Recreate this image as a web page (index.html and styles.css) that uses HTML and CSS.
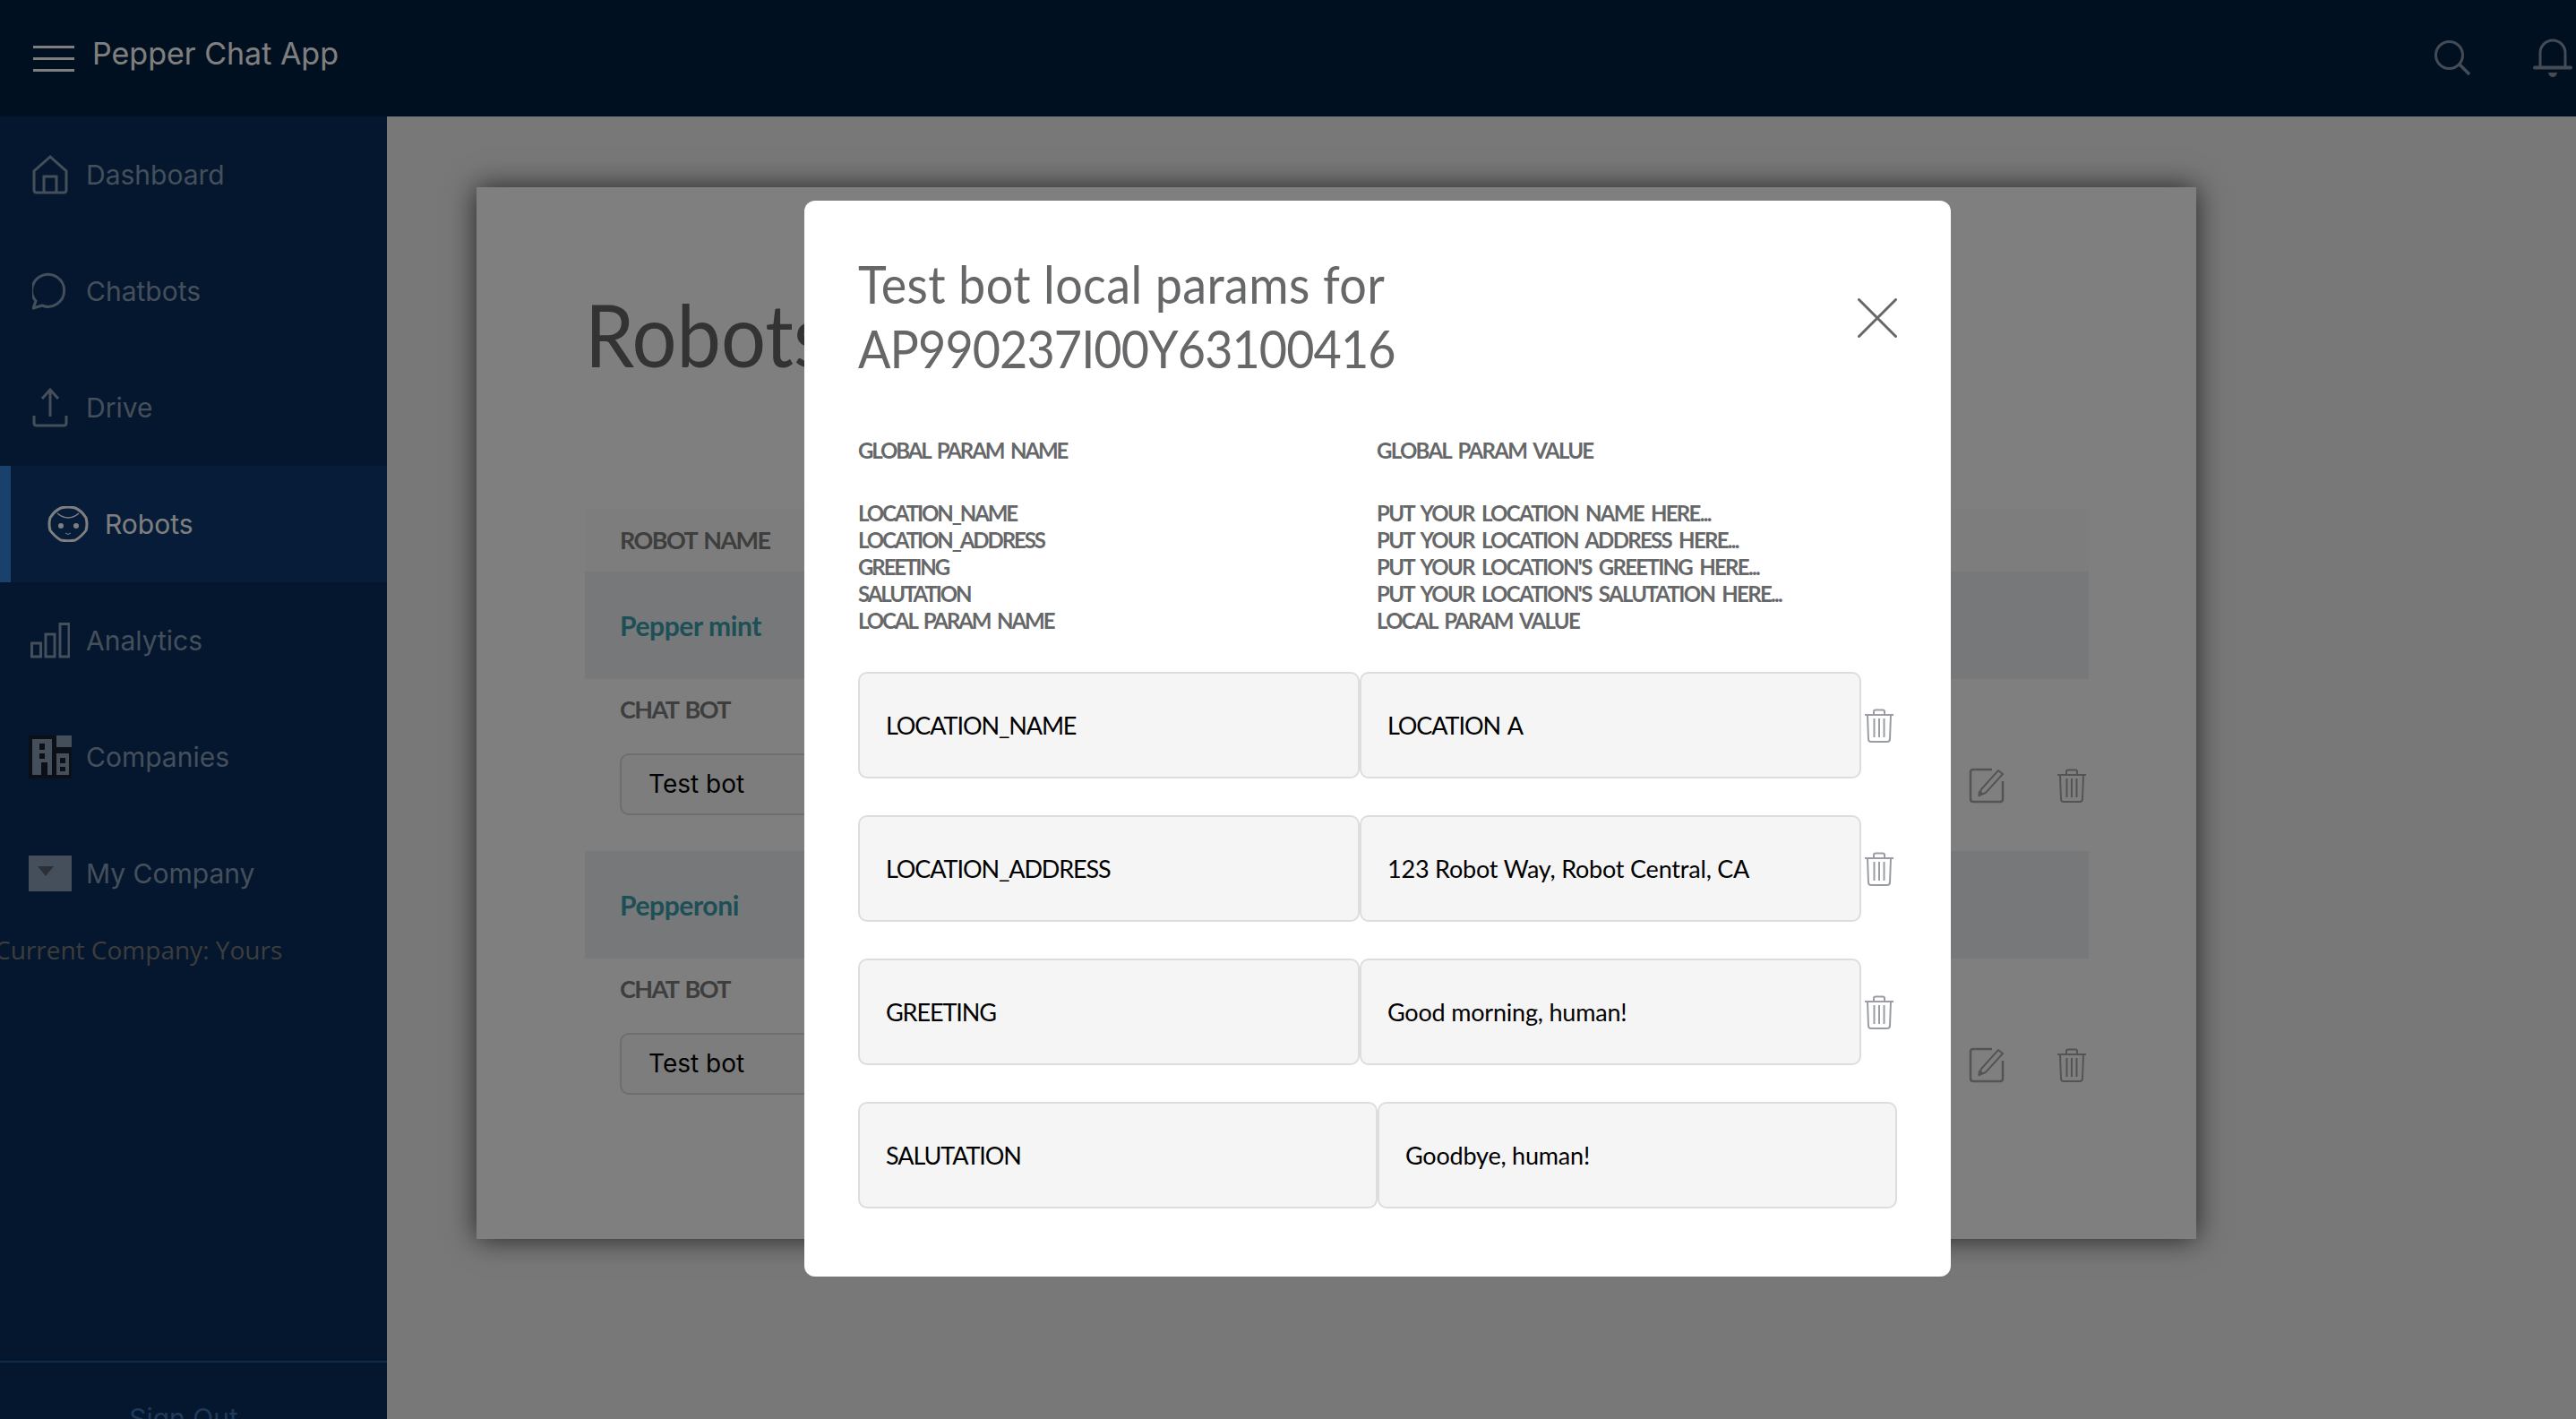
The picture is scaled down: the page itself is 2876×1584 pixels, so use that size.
FILE: index.html
```html
<!DOCTYPE html>
<html lang="en">
<head>
  <meta charset="UTF-8">
  <meta name="viewport" content="width=device-width, initial-scale=1.0">
  <title>Pepper Chat App</title>
  <link rel="stylesheet" href="styles.css">
</head>
<body>
  <svg class="icon-defs" width="0" height="0">
    <symbol id="trash" viewBox="0 0 34 38">
      <path d="M1 7h32M11 7V3.500Q11 1.500 13 1.500h8q2 0 2 2V7M4 7l1 27q0 3 3 3h18q3 0 3-3l1-27M11.500 11v21M17 11v21M22.500 11v21" fill="none" stroke="currentColor" stroke-width="2"/>
    </symbol>
    <symbol id="edit" viewBox="0 0 40 40">
      <path d="M26 2H5Q2 2 2 5v30q0 3 3 3h30q3 0 3-3V15" fill="none" stroke="currentColor" stroke-width="2.500"/>
      <path d="M33 3l5 4-19 21-7 3 2-7zM11 27l3 3" fill="none" stroke="currentColor" stroke-width="2"/>
      <path d="M10 31l2-6 5 4z" fill="currentColor"/>
    </symbol>
  </svg>

  <header class="topbar">
    <div class="brand">
      <div class="hamburger"><span></span><span></span><span></span></div>
      <span class="brand-name">Pepper Chat App</span>
    </div>
    <div class="topbar-icons">
      <svg class="icon-search" viewBox="0 0 40 40"><circle cx="16.500" cy="16.500" r="15" fill="none" stroke="currentColor" stroke-width="3"/><path d="M28 27l11 11" fill="none" stroke="currentColor" stroke-width="3.500"/></svg>
      <svg class="icon-bell" viewBox="0 0 44 44"><path d="M8 32V16a14 14 0 0 1 28 0v16" fill="none" stroke="currentColor" stroke-width="3"/><path d="M2 32.500h40" fill="none" stroke="currentColor" stroke-width="4" stroke-linecap="round"/><path d="M17 38h10q-1 5-5 5t-5-5z" fill="currentColor"/></svg>
    </div>
  </header>

  <div class="layout">
    <aside class="sidebar">
      <nav class="side-nav">
        <a class="nav-item">
          <svg class="nav-icon" viewBox="0 0 40 44"><path d="M20 2L2 18v21q0 3 3 3h30q3 0 3-3V18zM13 42V24h14v18" fill="none" stroke="currentColor" stroke-width="3"/></svg>
          <span>Dashboard</span>
        </a>
        <a class="nav-item">
          <svg class="nav-icon" viewBox="0 0 40 40"><path d="M4 31a18 18 0 1 1 7 5l-10 3z" fill="none" stroke="currentColor" stroke-width="3" stroke-linejoin="round"/></svg>
          <span>Chatbots</span>
        </a>
        <a class="nav-item">
          <svg class="nav-icon" viewBox="0 0 40 44"><path d="M20 32V3M11 12l9-10 9 10M2 31v8q0 3 3 3h30q3 0 3-3v-8" fill="none" stroke="currentColor" stroke-width="3"/></svg>
          <span>Drive</span>
        </a>
        <a class="nav-item nav-item-active">
          <svg class="nav-icon-robot" viewBox="0 0 46 40"><path d="M15 2Q23 0 31 2Q38 5 43 13Q45 20 43 27Q38 34 31 38Q23 39.500 15 38Q8 34 3 27Q1 20 3 13Q8 5 15 2z" fill="none" stroke="currentColor" stroke-width="3" stroke-linejoin="round"/><path d="M11 8q12 10 24 0" fill="none" stroke="currentColor" stroke-width="1.500"/><circle cx="15" cy="22" r="3" fill="currentColor"/><circle cx="32" cy="22" r="3" fill="currentColor"/><path d="M20 30q3 3 6 0" fill="none" stroke="currentColor" stroke-width="1"/></svg>
          <span>Robots</span>
        </a>
        <a class="nav-item">
          <svg class="nav-icon-wide" viewBox="0 0 44 40"><path d="M1.500 23h10v15h-10zM17 13h10v25H17zM33 1.500h10V38H33z" fill="none" stroke="currentColor" stroke-width="3"/></svg>
          <span>Analytics</span>
        </a>
        <a class="nav-item">
          <svg class="nav-icon-box" viewBox="0 0 48 48"><rect width="48" height="48" fill="#16202e"/><path d="M4 4h22v40h-5V30h-7v14H4zM31 0h17v13H31zM31 20h14v24H31z" fill="currentColor"/><path d="M12 9h6v7h-6zM12 20h6v6h-6zM35 25h6v6h-6zM35 35h6v5h-6z" fill="#16202e"/></svg>
          <span>Companies</span>
        </a>
        <a class="nav-item">
          <svg class="nav-icon-box" viewBox="0 0 48 40"><rect width="48" height="40" fill="currentColor"/><path d="M10 12h18l-9 11z" fill="#545e70"/></svg>
          <span>My Company</span>
        </a>
      </nav>
      <div class="current-company">Current Company: Yours</div>
      <div class="side-footer">Sign Out</div>
    </aside>

    <main class="content">
      <section class="card">
        <h1>Robots</h1>
        <div class="robot-head">ROBOT NAME</div>

        <div class="robot-row">Pepper mint</div>
        <div class="robot-sub">
          <div>
            <div class="robot-label">CHAT BOT</div>
            <div class="bot-select">Test bot</div>
          </div>
          <div class="robot-actions">
            <svg class="icon-edit"><use href="#edit"/></svg>
            <svg class="icon-trash"><use href="#trash"/></svg>
          </div>
        </div>

        <div class="robot-row">Pepperoni</div>
        <div class="robot-sub">
          <div>
            <div class="robot-label">CHAT BOT</div>
            <div class="bot-select">Test bot</div>
          </div>
          <div class="robot-actions">
            <svg class="icon-edit"><use href="#edit"/></svg>
            <svg class="icon-trash"><use href="#trash"/></svg>
          </div>
        </div>
      </section>
    </main>
  </div>

  <div class="overlay">
    <div class="modal">
      <div class="modal-head">
        <h2><span class="title-line">Test bot local params for</span><span class="title-line title-id">AP990237I00Y63100416</span></h2>
        <svg class="icon-close" viewBox="0 0 44 44"><path d="M1.500 1.500l41 41M42.500 1.500l-41 41" fill="none" stroke="currentColor" stroke-width="3" stroke-linecap="round"/></svg>
      </div>

      <div class="param-info">
        <div class="param-names">
          <div class="param-title">GLOBAL PARAM NAME</div>
          <div>LOCATION_NAME</div>
          <div>LOCATION_ADDRESS</div>
          <div>GREETING</div>
          <div>SALUTATION</div>
          <div>LOCAL PARAM NAME</div>
        </div>
        <div class="param-values">
          <div class="param-title">GLOBAL PARAM VALUE</div>
          <div>PUT YOUR LOCATION NAME HERE...</div>
          <div>PUT YOUR LOCATION ADDRESS HERE...</div>
          <div>PUT YOUR LOCATION'S GREETING HERE...</div>
          <div>PUT YOUR LOCATION'S SALUTATION HERE...</div>
          <div>LOCAL PARAM VALUE</div>
        </div>
      </div>

      <div class="param-row">
        <div class="param-field param-key">LOCATION_NAME</div>
        <div class="param-field param-key">LOCATION A</div>
        <svg class="param-trash"><use href="#trash"/></svg>
      </div>
      <div class="param-row">
        <div class="param-field param-key">LOCATION_ADDRESS</div>
        <div class="param-field">123 Robot Way, Robot Central, CA</div>
        <svg class="param-trash"><use href="#trash"/></svg>
      </div>
      <div class="param-row">
        <div class="param-field param-key">GREETING</div>
        <div class="param-field">Good morning, human!</div>
        <svg class="param-trash"><use href="#trash"/></svg>
      </div>
      <div class="param-row">
        <div class="param-field param-key">SALUTATION</div>
        <div class="param-field">Goodbye, human!</div>
      </div>
    </div>
  </div>
</body>
</html>
```

FILE: styles.css
```css
* {
  box-sizing: border-box;
}
html, body {
  height: 100%;
}
body {
  margin: 0;
  overflow: hidden;
  font-family: "Lato", "Open Sans", sans-serif;
  background-color: #f0f0f0;
  color: #000;
}
.icon-defs {
  display: block;
  height: 0;
}
.topbar {
  height: 130px;
  background-color: #022040;
  display: flex;
  justify-content: space-between;
  align-items: center;
}
.brand {
  display: flex;
  align-items: center;
  padding-left: 37px;
}
.hamburger {
  width: 46px;
  height: 29px;
  display: flex;
  flex-direction: column;
  justify-content: space-between;
  margin-right: 20px;
}
.hamburger span {
  display: block;
  height: 3px;
  background-color: #fff;
}
.brand-name {
  font-family: "Inter", sans-serif;
  font-size: 34px;
  font-weight: 400;
  color: #fff;
  margin-top: -12px;
}
.topbar-icons {
  display: flex;
  align-items: center;
  gap: 70px;
  margin-right: 4px;
  color: #8a96a8;
}
.icon-search {
  width: 40px;
  height: 40px;
}
.icon-bell {
  width: 44px;
  height: 44px;
}
.layout {
  display: flex;
  height: 1454px;
}
.sidebar {
  width: 432px;
  flex-shrink: 0;
  background-color: #082e5c;
  display: flex;
  flex-direction: column;
  overflow: hidden;
}
.nav-item {
  height: 130px;
  display: flex;
  align-items: center;
  padding-left: 32px;
  font-family: "Inter", sans-serif;
  font-size: 30px;
  font-weight: 400;
  color: #8a9eb6;
}
.nav-item span {
  margin-left: 16px;
}
.nav-icon {
  width: 48px;
  height: 44px;
  padding: 0 4px;
}
.nav-icon-wide {
  width: 44px;
  height: 40px;
  margin: 0 2px;
}
.nav-icon-box {
  width: 48px;
  height: auto;
}
.nav-icon-robot {
  width: 46px;
}
.nav-item-active {
  background-color: #0c3870;
  border-left: 12px solid #3482d6;
  color: #fff;
  padding-left: 41px;
}
.nav-item-active span {
  margin-left: 18px;
}
.current-company {
  font-family: "Open Sans", sans-serif;
  font-size: 28px;
  line-height: 40px;
  color: #7a7a7a;
  margin: 0 0 0 -6px;
  white-space: nowrap;
}
.side-footer {
  margin-top: auto;
  height: 65px;
  border-top: 2px solid #1c549a;
  padding: 44px 22px 0 0;
  text-align: center;
  font-family: "Inter", sans-serif;
  font-size: 30px;
  color: #3874b8;
}
.content {
  flex: 1;
  padding: 79px 0 0 100px;
}
.card {
  width: 1920px;
  height: 1174px;
  background-color: #fff;
  box-shadow: 0 0 30px rgba(0, 0, 0, 0.7);
  padding: 0 120px 0 121px;
}
h1 {
  margin: 0;
  height: 358px;
  padding-top: 105px;
  font-size: 96px;
  font-weight: 400;
  line-height: 118px;
  color: #666;
  transform: scaleX(0.92);
  transform-origin: left;
}
.robot-head {
  height: 71px;
  line-height: 71px;
  padding-left: 39px;
  background-color: #fafafa;
  font-size: 27px;
  font-weight: 700;
  letter-spacing: -1.6px;
  word-spacing: 3px;
  color: #7c7c7c;
}
.robot-row {
  height: 120px;
  line-height: 120px;
  padding-left: 39px;
  background-color: #eef0f4;
  font-size: 30px;
  font-weight: 700;
  letter-spacing: -0.4px;
  color: #3a9eae;
}
.robot-sub {
  height: 192px;
  padding: 16px 2px 0 39px;
  display: flex;
  justify-content: space-between;
}
.robot-label {
  height: 36px;
  line-height: 36px;
  font-size: 27px;
  font-weight: 700;
  letter-spacing: -1.6px;
  word-spacing: 3px;
  color: #7c7c7c;
}
.bot-select {
  width: 640px;
  height: 69px;
  line-height: 65px;
  margin-top: 31px;
  padding-left: 30px;
  background-color: #fafafa;
  border: 2px solid #dcdcdc;
  border-radius: 10px;
  font-family: "Inter", sans-serif;
  font-size: 28px;
}
.robot-actions {
  display: flex;
  align-items: center;
  gap: 58px;
  height: 206px;
  color: #a8a8a8;
}
.icon-edit {
  width: 40px;
  height: 40px;
}
.icon-trash {
  width: 34px;
  height: 38px;
}
.overlay {
  position: fixed;
  inset: 0;
  background-color: rgba(0, 0, 0, 0.5);
}
.modal {
  width: 1280px;
  height: 1201px;
  margin: 224px 0 0 898px;
  padding: 57px 60px 0;
  background-color: #fff;
  border-radius: 12px;
  color: #666769;
}
.modal-head {
  display: flex;
  justify-content: space-between;
  align-items: flex-start;
  height: 190px;
}
h2 {
  margin: 0;
  font-size: 58px;
  font-weight: 400;
  line-height: 72px;
  transform: scaleX(0.93);
  transform-origin: left;
  white-space: nowrap;
}
.title-line {
  display: block;
  letter-spacing: 0.4px;
}
.title-id {
  letter-spacing: -1px;
}
.icon-close {
  width: 44px;
  height: 44px;
  margin-top: 52px;
  color: #666769;
}
.param-info {
  display: grid;
  grid-template-columns: 579px 1fr;
  margin-top: 17px;
  font-size: 24px;
  font-weight: 700;
  line-height: 30px;
  word-spacing: 4px;
}
.param-names {
  letter-spacing: -2.1px;
}
.param-values {
  letter-spacing: -1.7px;
}
.param-title {
  height: 70px;
}
.param-row {
  display: flex;
  align-items: center;
  margin-top: 41px;
  height: 119px;
}
.param-info + .param-row {
  margin-top: 42px;
}
.param-field {
  flex: 1;
  height: 119px;
  line-height: 115px;
  padding-left: 29px;
  background-color: #f5f5f5;
  border: 2px solid #ddd;
  border-radius: 10px;
  font-size: 27px;
  letter-spacing: -0.2px;
  color: #000;
}
.param-key {
  letter-spacing: -1.1px;
  word-spacing: 3px;
}
.param-trash {
  width: 40px;
  height: 38px;
  flex-shrink: 0;
  color: #9a9ea3;
}
```
